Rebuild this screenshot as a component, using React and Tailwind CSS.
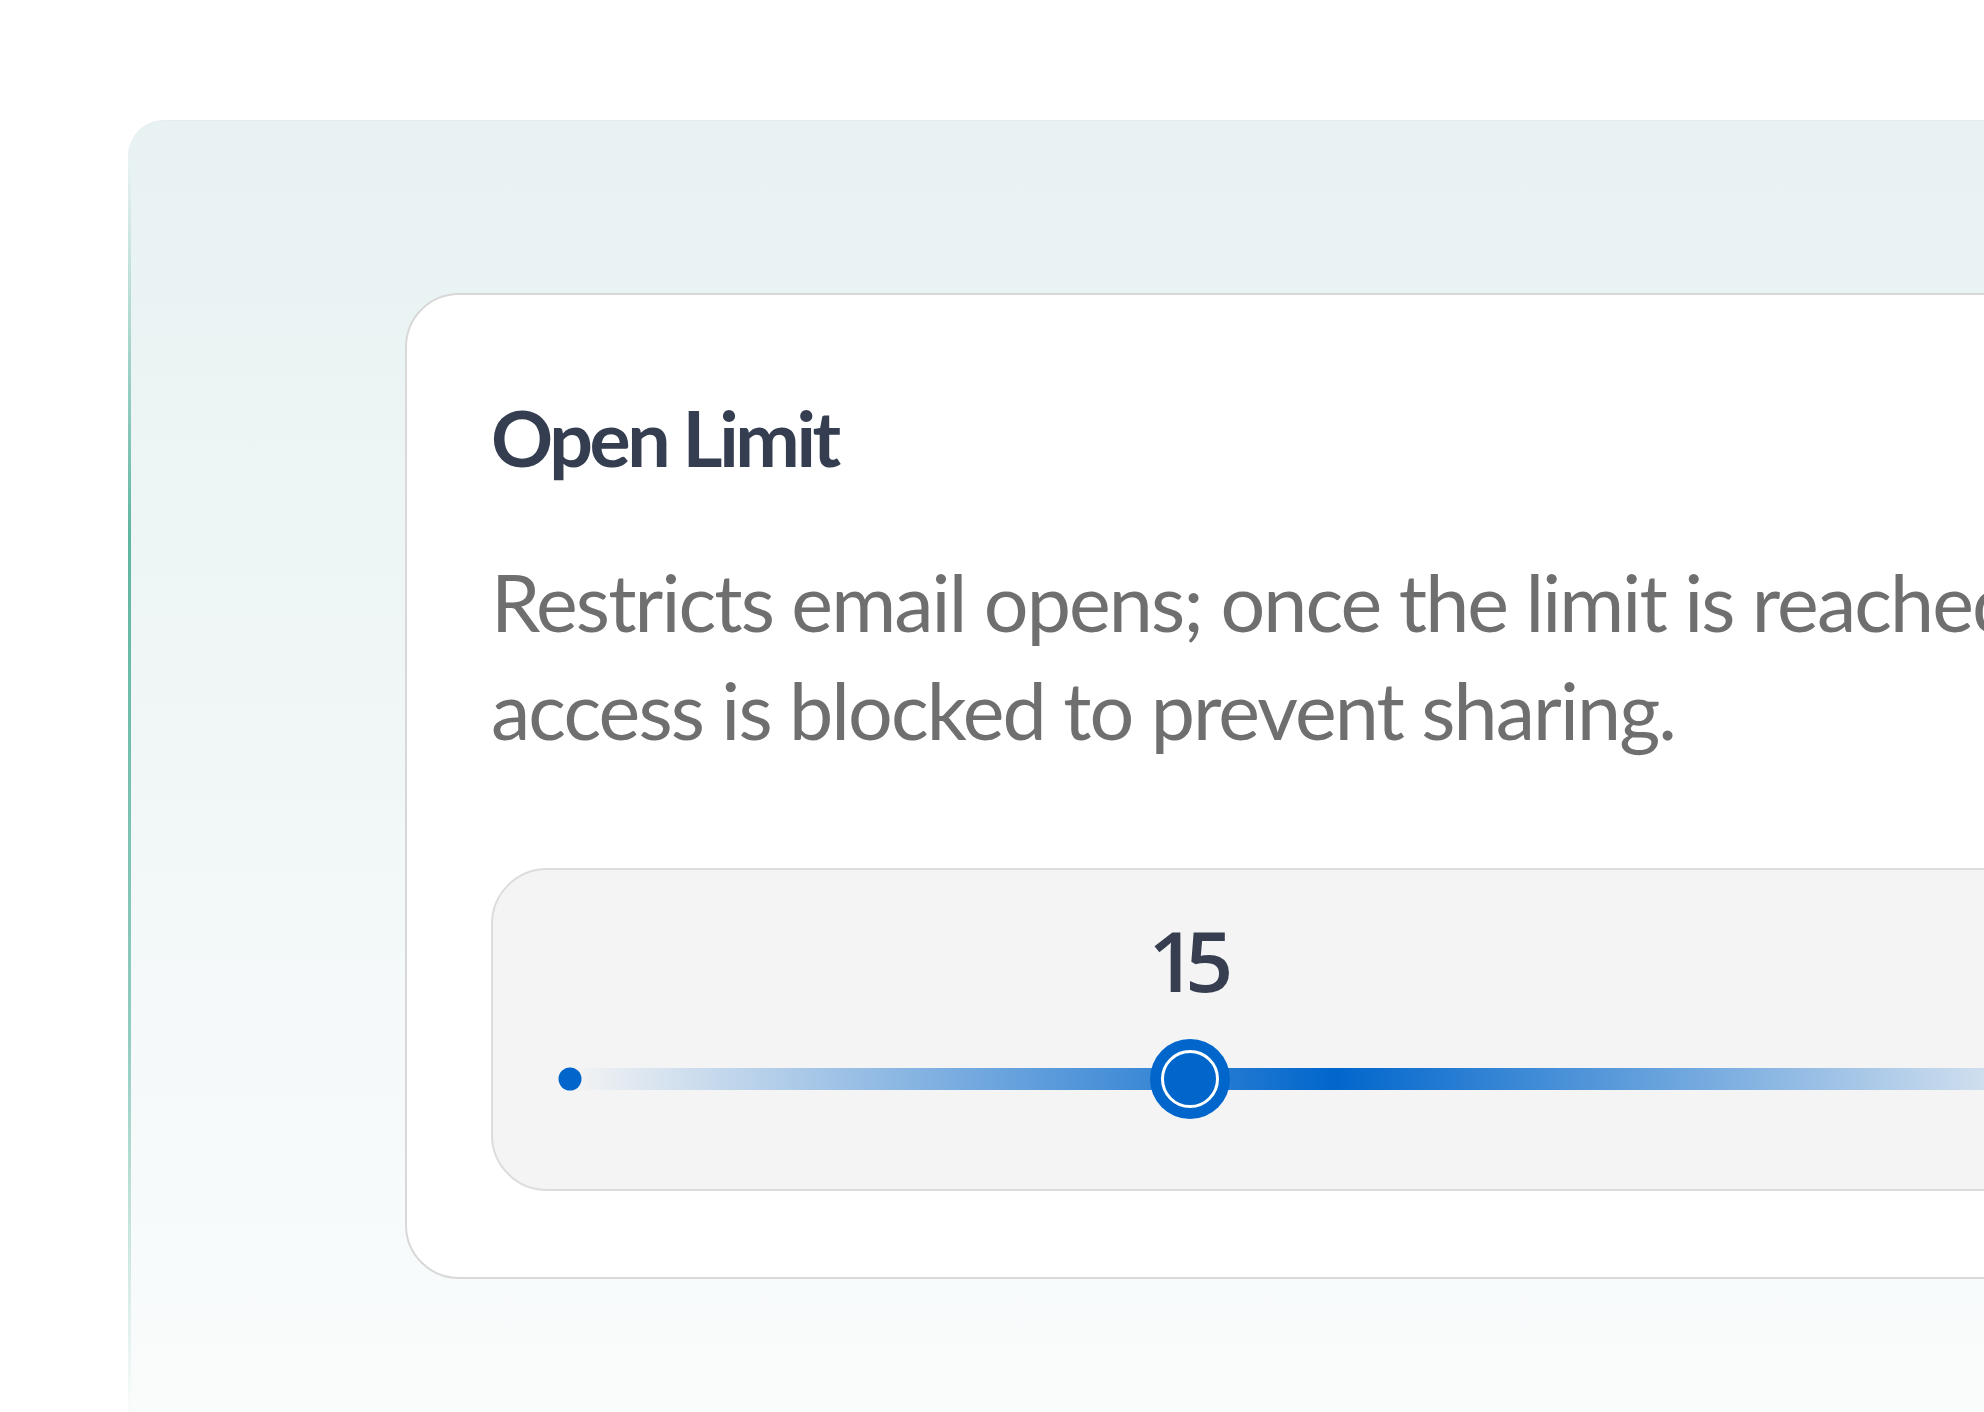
import React from 'react'

const value = 15
const min = 0
const max = 37

const OpenLimitCard = () => {
    const pct = ((value - min) / (max - min)) * 100

    return (
        <div className="w-[1700px] shrink-0 bg-white border-2 border-[#d8d8d8] rounded-[54px] pt-[104px] pb-[86px] pl-[84px] flex flex-col">
            <h2 className="text-[77px] leading-none font-bold tracking-[-3.4px] text-[#353d50]">
                Open Limit
            </h2>

            <p className="mt-[72px] text-[79px] leading-[108px] tracking-[-1.9px] text-[#6f6f6f] whitespace-nowrap">
                Restricts email opens; once the limit is reached,
                <br />
                access is blocked to prevent sharing.
            </p>

            <div className="mt-[104px] w-[1700px] bg-[#f4f4f4] border-2 border-[#dcdcdc] rounded-[56px] pt-[50px] pb-[70px]">
                <div className="ml-[77px] w-[1530px]">
                    <div className="relative h-[84px]">
                        <span
                            className="absolute top-[-2px] -translate-x-1/2 pr-[10px] font-['Open_Sans',sans-serif] text-[84px] leading-none font-semibold tracking-[-11px] text-[#363e50]"
                            style={{ left: `${pct}%` }}
                        >
                            {value}
                        </span>
                    </div>

                    <div className="relative h-[80px] mt-[35px]">
                        <div className="absolute left-0 right-0 top-1/2 -translate-y-1/2 h-[22px] bg-[linear-gradient(90deg,rgba(0,102,204,0)_0%,#0066cc_50%,rgba(0,102,204,0)_100%)]" />
                        <div className="absolute left-0 top-1/2 -translate-x-1/2 -translate-y-1/2 w-[23px] h-[23px] rounded-full bg-[#0066cc]" />
                        <div
                            className="absolute top-0 -translate-x-1/2 w-[80px] h-[80px] rounded-full bg-[#0066cc] flex items-center justify-center"
                            style={{ left: `${pct}%` }}
                        >
                            <div className="w-[58px] h-[58px] rounded-full border-[3px] border-white bg-[#0066cc]" />
                        </div>
                    </div>
                </div>
            </div>
        </div>
    )
}

export default function App() {
    return (
        <div className="w-[1984px] h-[1412px] overflow-hidden bg-white pl-[128px] pt-[120px] font-['Lato',sans-serif]">
            <div className="relative w-[2000px] h-[1292px] rounded-tl-[36px] border-t border-[#e3eded] bg-gradient-to-b from-[#e8f2f2] to-[#fafcfc] pl-[277px] pt-[172px]">
                <div className="absolute left-0 top-[40px] bottom-0 w-[3px] bg-[linear-gradient(180deg,rgba(80,174,152,0)_0%,rgba(80,174,152,0.9)_30%,rgba(80,174,152,0.6)_70%,rgba(80,174,152,0)_100%)]" />
                <OpenLimitCard />
            </div>
        </div>
    )
}
